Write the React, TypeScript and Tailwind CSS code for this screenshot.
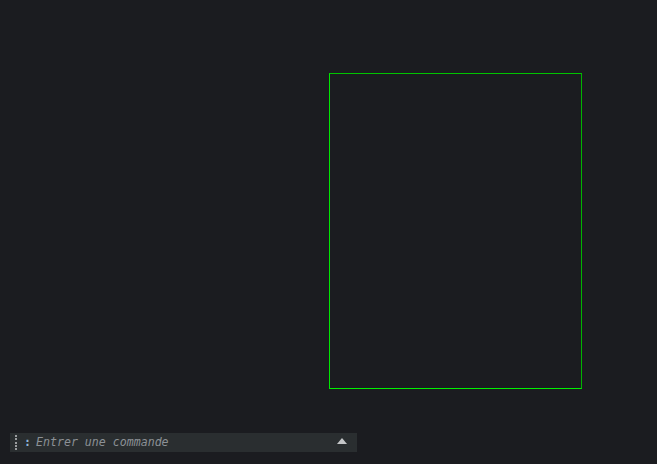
export default function App() {
  return (
    <div className="h-[464px] w-[657px] overflow-hidden bg-[#1b1c20] pt-[73px]">
      {/* canvas frame */}
      <div className="ml-[329px] h-[316px] w-[253px] border border-solid [border-color:#00c400_#00b400_#00f000_#00e600]" />

      {/* command bar */}
      <div className="ml-[10px] mt-[44px] flex h-[19px] w-[347px] items-center bg-[#2a2e30] pr-[10px]">
        <div className="ml-[5px] flex h-[15px] w-[2px] flex-col justify-between">
          <span className="h-[2px] bg-[#9a9c9e]" />
          <span className="h-[2px] bg-[#9a9c9e]" />
          <span className="h-[2px] bg-[#9a9c9e]" />
          <span className="h-[2px] bg-[#9a9c9e]" />
          <span className="h-[2px] bg-[#9a9c9e]" />
        </div>
        <span
          className="ml-[7px] pt-[1px] text-[11.6px] font-bold leading-none text-[#8fb6d9]"
          style={{ fontFamily: '"DejaVu Sans Mono", monospace' }}
        >
          :
        </span>
        <span
          className="ml-[5px] flex-1 pt-[1px] text-[11.6px] italic leading-none text-[#8c9196]"
          style={{ fontFamily: '"DejaVu Sans Mono", monospace' }}
        >
          Entrer une commande
        </span>
        <svg width="10" height="6" viewBox="0 0 10 6" className="mb-[3px]">
          <polygon points="5,0 10,6 0,6" fill="#c4c6c8" />
        </svg>
      </div>
    </div>
  );
}
